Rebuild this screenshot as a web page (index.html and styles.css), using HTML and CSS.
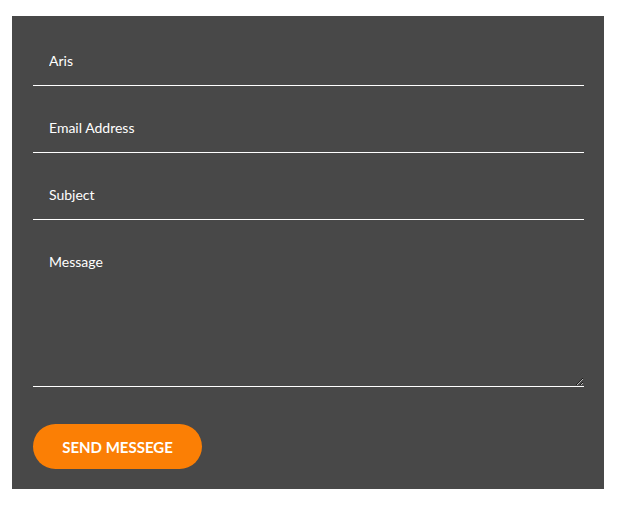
FILE: index.html
```html
<!DOCTYPE html>
<html lang="en">
<head>
  <meta charset="UTF-8">
  <title>Contact</title>
  <link rel="stylesheet" href="styles.css">
</head>
<body>
  <div class="wrapper">
    <form class="contact-form">
      <input type="text" class="field" value="Aris">
      <input type="email" class="field" placeholder="Email Address">
      <input type="text" class="field" placeholder="Subject">
      <textarea class="field message" placeholder="Message"></textarea>
      <button type="submit" class="send-btn">Send Messege</button>
    </form>
  </div>
</body>
</html>
```

FILE: styles.css
```css
:root {
  --panel-bg: #484848;
  --accent: #fb7f05;
  --text: #ffffff;
  --font-family: 'Lato', sans-serif;
}
* {
  box-sizing: border-box;
  margin: 0;
  padding: 0;
}
body {
  background: #fff;
  font-family: var(--font-family);
}
.wrapper {
  padding: 16px 12px;
}
.contact-form {
  width: 592px;
  background: var(--panel-bg);
  padding: 21px 20px 20px 21px;
  display: flex;
  flex-direction: column;
  align-items: flex-start;
}
.field {
  width: 551px;
  height: 49px;
  margin-bottom: 18px;
  padding: 0 16px 2px;
  background: transparent;
  border: none;
  border-bottom: 1px solid var(--text);
  color: var(--text);
  font-family: var(--font-family);
  font-size: 14px;
  outline: none;
}
.field::placeholder {
  color: var(--text);
  opacity: 1;
}
.message {
  height: 149px;
  padding-top: 15px;
  margin-bottom: 37px;
  line-height: 18px;
}
.send-btn {
  width: 169px;
  height: 45px;
  border: none;
  border-radius: 23px;
  background: var(--accent);
  color: var(--text);
  font-family: var(--font-family);
  font-size: 15px;
  font-weight: 700;
  text-transform: uppercase;
  cursor: pointer;
}
```
